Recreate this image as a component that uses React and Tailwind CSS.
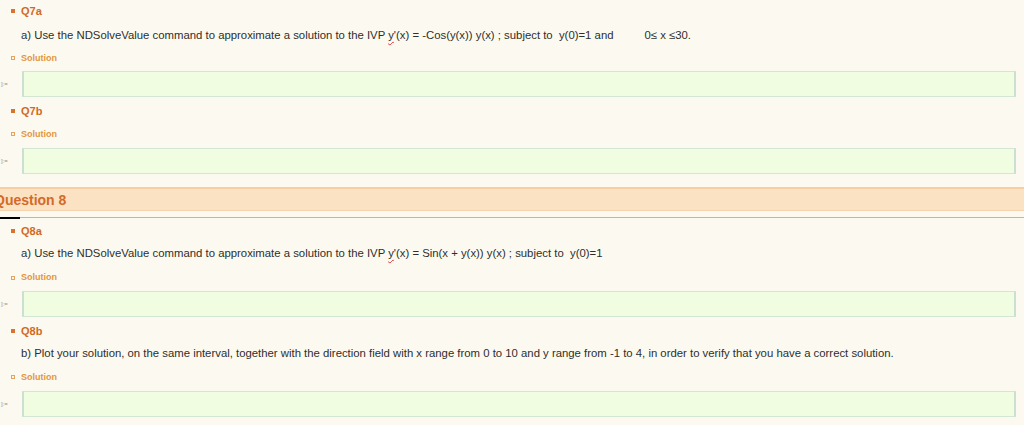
import React from "react";

const font = { fontFamily: '"Liberation Sans", Arial, sans-serif' };

function Header({ label, h, extra = "" }) {
  return (
    <div className={`flex items-center ${h} ${extra}`}>
      <div className="w-[11px]" />
      <div className="w-[4px] h-[4px] bg-[#d9742f]" />
      <div className="w-[6px]" />
      <span className="text-[11px] font-bold text-[#d2691e] leading-none">{label}</span>
    </div>
  );
}

function Sol({ h }) {
  return (
    <div className={`flex items-center ${h}`}>
      <div className="w-[11px]" />
      <div className="w-[4px] h-[4px] border border-[#e8a35a]" />
      <div className="w-[6px]" />
      <span className="text-[9px] font-bold text-[#e3953f] leading-none">Solution</span>
    </div>
  );
}

function Box({ mt = "" }) {
  return (
    <div className={`flex items-center h-[26px] ${mt}`}>
      <div className="w-[22px] text-[6px] text-[#a58a6a] leading-none pl-[1px]">]:=</div>
      <div className="h-full w-[994px] bg-[#f1fde1] border border-[#d2e6d3] border-l-2 border-r-2 border-l-[#cbe0d3] border-r-[#cbe0d3]" />
    </div>
  );
}

function Text({ h, children }) {
  return (
    <div className={`flex items-center pl-[21px] ${h} text-[11.35px] text-[#2e2e2e] whitespace-pre leading-none`}>
      {children}
    </div>
  );
}

const Y = () => (
  <span className="underline decoration-wavy decoration-[#d33] decoration-1 underline-offset-2">y</span>
);

export default function App() {
  return (
    <div style={font} className="w-[1024px] h-[425px] bg-[#fcfaf0] overflow-hidden flex flex-col">
      <Header label="Q7a" h="h-[22px]" />
      <Text h="h-[28px]">
        a) Use the NDSolveValue command to approximate a solution to the IVP <Y />'(x) = -Cos(y(x)) y(x) ; subject to  y(0)=1 and
        <span className="ml-[31px]">0≤ x ≤30.</span>
      </Text>
      <Sol h="h-[16px]" />
      <Box mt="mt-[5px]" />
      <Header label="Q7b" h="h-[28px]" />
      <Sol h="h-[18px]" />
      <Box mt="mt-[5px]" />
      <div className="mt-[13px] h-[24px] bg-[#fbe2c3] border-t-2 border-t-[#f7cea4] border-b border-b-[#f6d3ae] flex items-center">
        <span className="ml-[-6px] text-[14px] font-bold text-[#d4692a] leading-none">Question 8</span>
      </div>
      <div className="mt-[6px] h-[1px] bg-[#b8b6b0] flex">
        <div className="w-[20px] h-[2px] bg-black" />
      </div>
      <Header label="Q8a" h="h-[26px]" />
      <Text h="h-[20px]">
        a) Use the NDSolveValue command to approximate a solution to the IVP <Y />'(x) = Sin(x + y(x)) y(x) ; subject to  y(0)=1
      </Text>
      <Sol h="h-[27px]" />
      <Box />
      <Header label="Q8b" h="h-[28px]" />
      <Text h="h-[18px]">
        b) Plot your solution, on the same interval, together with the direction field with x range from 0 to 10 and y range from -1 to 4, in order to verify that you have a correct solution.
      </Text>
      <Sol h="h-[28px]" />
      <Box />
    </div>
  );
}
